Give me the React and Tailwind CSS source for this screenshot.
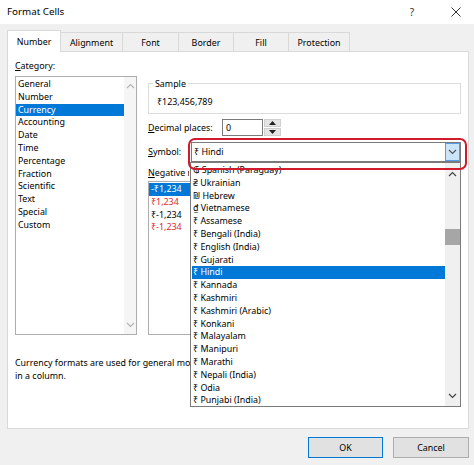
import React from "react";

const categories = [
  "General", "Number", "Currency", "Accounting", "Date", "Time",
  "Percentage", "Fraction", "Scientific", "Text", "Special", "Custom",
];

const symbols = [
  ["₲", "Spanish (Paraguay)"],
  ["₴", "Ukrainian"],
  ["₪", "Hebrew"],
  ["₫", "Vietnamese"],
  ["₹", "Assamese"],
  ["₹", "Bengali (India)"],
  ["₹", "English (India)"],
  ["₹", "Gujarati"],
  ["₹", "Hindi"],
  ["₹", "Kannada"],
  ["₹", "Kashmiri"],
  ["₹", "Kashmiri (Arabic)"],
  ["₹", "Konkani"],
  ["₹", "Malayalam"],
  ["₹", "Manipuri"],
  ["₹", "Marathi"],
  ["₹", "Nepali (India)"],
  ["₹", "Odia"],
  ["₹", "Punjabi (India)"],
];

const negatives = [
  { text: "-₹1,234", red: false },
  { text: "₹1,234", red: true },
  { text: "₹-1,234", red: false },
  { text: "₹-1,234", red: true },
];

const tabs = [
  { name: "Number", w: "w-[54px]" },
  { name: "Alignment", w: "w-[62px]" },
  { name: "Font", w: "w-[56px]" },
  { name: "Border", w: "w-[55px]" },
  { name: "Fill", w: "w-[55px]" },
  { name: "Protection", w: "w-[61px]" },
];

function Chevron({ up, className }) {
  return (
    <svg width="9" height="6" viewBox="0 0 9 6" className={className}>
      <path
        d={up ? "M1 5 L4.5 1.5 L8 5" : "M1 1 L4.5 4.5 L8 1"}
        fill="none"
        stroke="currentColor"
        strokeWidth="1.2"
      />
    </svg>
  );
}

export default function App() {
  return (
    <div className="relative w-[474px] h-[465px] overflow-hidden bg-[#f0f0f0] font-['Noto_Sans',sans-serif] text-[8.9px] text-black">
      {/* title bar */}
      <div className="h-[24px] bg-white flex items-center justify-between pl-[7px] pr-[13px]">
        <span className="text-[9.8px]">Format Cells</span>
        <div className="flex items-center gap-[37px]">
          <span className="text-[10px] text-[#333]">?</span>
          <svg width="10" height="10" viewBox="0 0 10 10">
            <path d="M0.5 0.5 L9.5 9.5 M9.5 0.5 L0.5 9.5" stroke="#333" strokeWidth="1" />
          </svg>
        </div>
      </div>

      {/* tabs */}
      <div className="flex items-end ml-[7px] mt-[7px] h-[21px]">
        {tabs.map((t, i) =>
          i === 0 ? (
            <div
              key={t.name}
              className={`${t.w} h-[22px] bg-white border border-b-0 border-[#d9d9d9] flex items-center justify-center relative z-10`}
            >
              {t.name}
            </div>
          ) : (
            <div
              key={t.name}
              className={`${t.w} h-[20px] border border-l-0 border-b-0 border-[#d9d9d9] flex items-center justify-center`}
            >
              {t.name}
            </div>
          )
        )}
      </div>

      {/* panel */}
      <div className="ml-[7px] w-[462px] h-[378px] -mt-px bg-white border border-[#d9d9d9] px-[7px] pt-[7px]">
        <div className="flex gap-[11px]">
          {/* category column */}
          <div className="w-[122px]">
            <div className="leading-[13px] mb-[4px]">
              <span className="underline">C</span>ategory:
            </div>
            <div className="h-[259px] border border-[#adadad] flex">
              <div className="flex-1 pt-[1px] leading-[12.8px]">
                {categories.map((c) => (
                  <div
                    key={c}
                    className={`pl-[2px] h-[12.8px] ${c === "Currency" ? "bg-[#0078d7] text-white" : ""}`}
                  >
                    {c}
                  </div>
                ))}
              </div>
              <div className="w-[12px] bg-[#f5f5f5] flex flex-col items-center justify-between py-[6px] text-[#b5b5b5]">
                <Chevron up />
                <Chevron />
              </div>
            </div>
          </div>

          {/* right column */}
          <div className="w-[313px]">
            <fieldset className="mt-[18px] h-[37px] border border-[#dcdcdc] px-[4px]">
              <legend className="px-[2px] leading-[13px]">Sample</legend>
              <div className="mt-[5px] pl-[4px] leading-[13px]">₹123,456,789</div>
            </fieldset>

            <div className="flex items-center mt-[5px] h-[17px]">
              <div className="w-[74px] whitespace-nowrap">
                <span className="underline">D</span>ecimal places:
              </div>
              <div className="w-[41px] h-[17px] border border-[#7a7a7a] pl-[3px] leading-[15px]">0</div>
              <div className="w-[17px] h-[17px] ml-px flex flex-col gap-px">
                <div className="flex-1 bg-[#e5e5e5] border border-[#cfcfcf] flex items-center justify-center">
                  <svg width="7" height="4" viewBox="0 0 7 4"><path d="M0 4 L3.5 0 L7 4 Z" fill="#222" /></svg>
                </div>
                <div className="flex-1 bg-[#e5e5e5] border border-[#cfcfcf] flex items-center justify-center">
                  <svg width="7" height="4" viewBox="0 0 7 4"><path d="M0 0 L3.5 4 L7 0 Z" fill="#222" /></svg>
                </div>
              </div>
            </div>

            <div className="flex items-center mt-[6px] h-[20px]">
              <div className="w-[43px] whitespace-nowrap">
                <span className="underline">S</span>ymbol:
              </div>
              <div className="flex-1 h-[20px] border border-[#7a7a7a] flex items-center">
                <span className="pl-[2px] flex-1">₹ Hindi</span>
                <div className="w-[15px] h-[18px] bg-[#cce4f7] border border-[#569de5] flex items-center justify-center text-[#555]">
                  <Chevron />
                </div>
              </div>
            </div>

            {/* the open dropdown covers the right part of this label and list */}
            <div className="mt-[4px] leading-[13px] w-[41px] overflow-hidden whitespace-nowrap">
              <span className="underline">N</span>egative numbers:
            </div>
            <div className="mt-[2px] h-[154px] border border-[#adadad] pt-[1px] leading-[12.8px]">
              {negatives.map((n, i) => (
                <div
                  key={i}
                  className={`pl-[2px] h-[12.8px] w-[41px] overflow-hidden whitespace-nowrap ${i === 0 ? "bg-[#0078d7] text-white" : ""} ${n.red ? "text-[#e0282e]" : ""}`}
                >
                  {n.text}
                </div>
              ))}
            </div>
          </div>
        </div>

        <div className="mt-[21px] leading-[13px]">
          <div className="w-[175px] overflow-hidden whitespace-nowrap">
            Currency formats are used for general monetary values.
          </div>
          <div>in a column.</div>
        </div>
      </div>

      {/* footer */}
      <div className="flex justify-end gap-[10px] pr-[5px] mt-[8px]">
        <button className="w-[75px] h-[21px] bg-[#e1e1e1] border border-[#0078d7]">OK</button>
        <button className="w-[76px] h-[21px] bg-[#e1e1e1] border border-[#adadad]">Cancel</button>
      </div>

      {/* open symbol dropdown */}
      <div className="absolute left-[190px] top-[162px] w-[271px] h-[245px] bg-white border border-[#7a7a7a] flex z-20">
        <div className="flex-1 pt-[1px] pl-[1px] leading-[12.8px] overflow-hidden">
          {symbols.map(([s, name]) => (
            <div
              key={name}
              className={`h-[12.8px] pl-[1px] whitespace-nowrap ${name === "Hindi" ? "bg-[#0078d7] text-white" : ""}`}
            >
              {s} {name}
            </div>
          ))}
        </div>
        <div className="w-[15px] bg-[#f0f0f0] flex flex-col items-center text-[#444]">
          <Chevron up className="mt-[8px]" />
          <div className="mt-[52px] w-[15px] h-[16px] bg-[#a6a6a6]" />
          <div className="flex-1" />
          <Chevron className="mb-[7px]" />
        </div>
      </div>

      {/* annotation ring */}
      <div className="absolute left-[188px] top-[138px] w-[279px] h-[32px] rounded-[7px] border-2 border-[#cf1b2b] z-30 pointer-events-none" />
    </div>
  );
}
